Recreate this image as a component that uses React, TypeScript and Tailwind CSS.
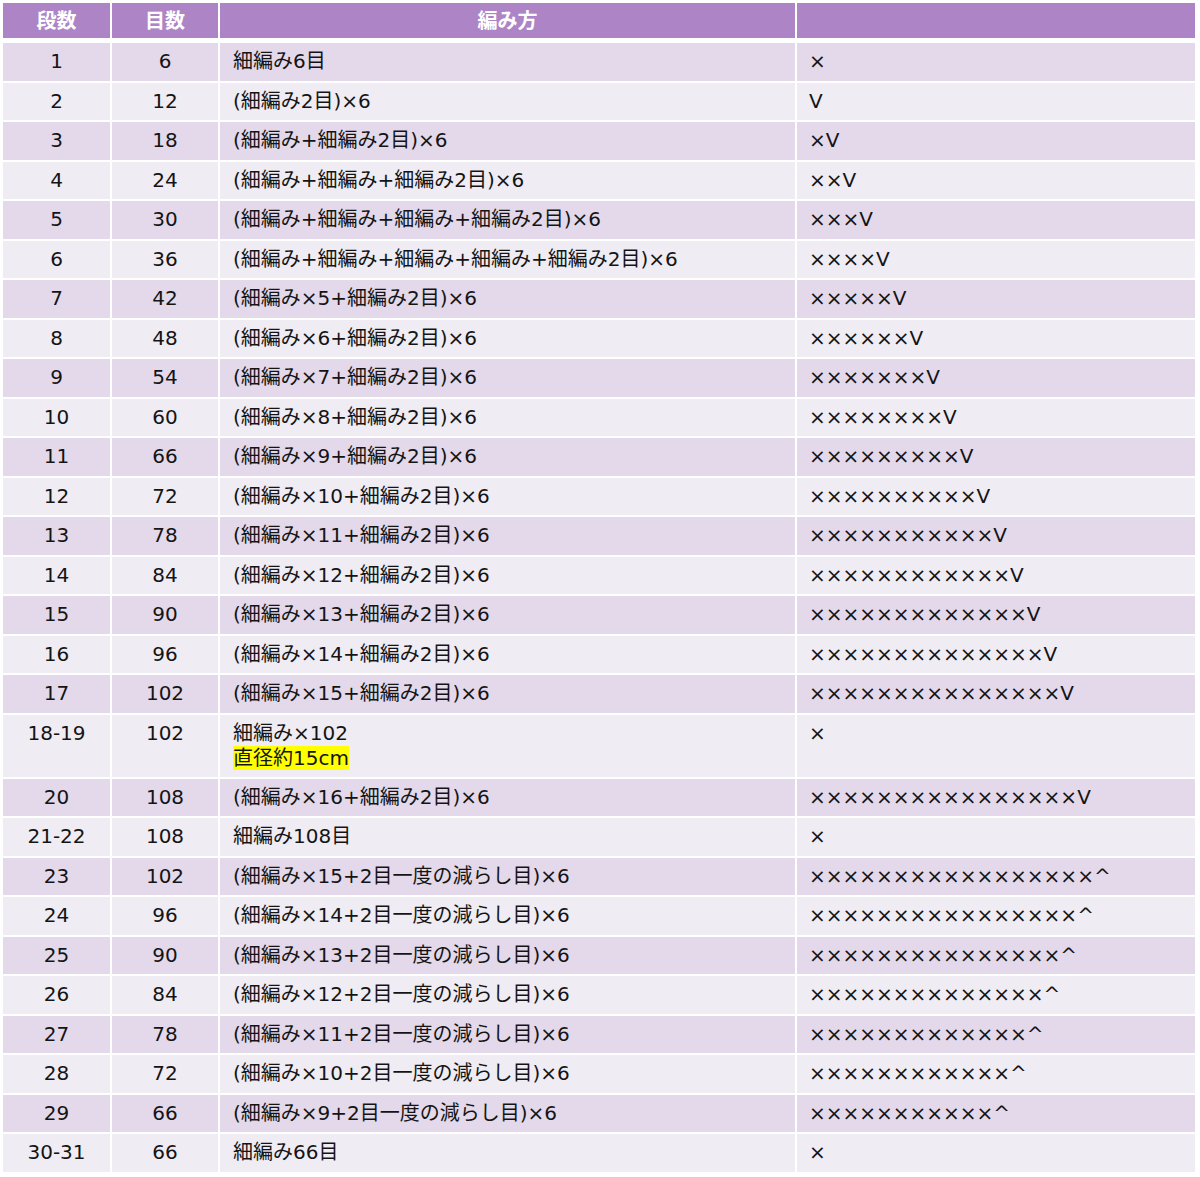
import React from "react";

type Row = { dan: string; me: string; how: React.ReactNode; sym: string; tall?: boolean };

const X = (n: number) => "×".repeat(n);

const rows: Row[] = [
  { dan: "1", me: "6", how: "細編み6目", sym: "×" },
  { dan: "2", me: "12", how: "(細編み2目)×6", sym: "V" },
  { dan: "3", me: "18", how: "(細編み+細編み2目)×6", sym: "×V" },
  { dan: "4", me: "24", how: "(細編み+細編み+細編み2目)×6", sym: "××V" },
  { dan: "5", me: "30", how: "(細編み+細編み+細編み+細編み2目)×6", sym: "×××V" },
  { dan: "6", me: "36", how: "(細編み+細編み+細編み+細編み+細編み2目)×6", sym: "××××V" },
  { dan: "7", me: "42", how: "(細編み×5+細編み2目)×6", sym: X(5) + "V" },
  { dan: "8", me: "48", how: "(細編み×6+細編み2目)×6", sym: X(6) + "V" },
  { dan: "9", me: "54", how: "(細編み×7+細編み2目)×6", sym: X(7) + "V" },
  { dan: "10", me: "60", how: "(細編み×8+細編み2目)×6", sym: X(8) + "V" },
  { dan: "11", me: "66", how: "(細編み×9+細編み2目)×6", sym: X(9) + "V" },
  { dan: "12", me: "72", how: "(細編み×10+細編み2目)×6", sym: X(10) + "V" },
  { dan: "13", me: "78", how: "(細編み×11+細編み2目)×6", sym: X(11) + "V" },
  { dan: "14", me: "84", how: "(細編み×12+細編み2目)×6", sym: X(12) + "V" },
  { dan: "15", me: "90", how: "(細編み×13+細編み2目)×6", sym: X(13) + "V" },
  { dan: "16", me: "96", how: "(細編み×14+細編み2目)×6", sym: X(14) + "V" },
  { dan: "17", me: "102", how: "(細編み×15+細編み2目)×6", sym: X(15) + "V" },
  {
    dan: "18-19",
    me: "102",
    how: (
      <>
        <div>細編み×102</div>
        <div>
          <span className="bg-[#ffff00]">直径約15cm</span>
        </div>
      </>
    ),
    sym: "×",
    tall: true,
  },
  { dan: "20", me: "108", how: "(細編み×16+細編み2目)×6", sym: X(16) + "V" },
  { dan: "21-22", me: "108", how: "細編み108目", sym: "×" },
  { dan: "23", me: "102", how: "(細編み×15+2目一度の減らし目)×6", sym: X(17) + "^" },
  { dan: "24", me: "96", how: "(細編み×14+2目一度の減らし目)×6", sym: X(16) + "^" },
  { dan: "25", me: "90", how: "(細編み×13+2目一度の減らし目)×6", sym: X(15) + "^" },
  { dan: "26", me: "84", how: "(細編み×12+2目一度の減らし目)×6", sym: X(14) + "^" },
  { dan: "27", me: "78", how: "(細編み×11+2目一度の減らし目)×6", sym: X(13) + "^" },
  { dan: "28", me: "72", how: "(細編み×10+2目一度の減らし目)×6", sym: X(12) + "^" },
  { dan: "29", me: "66", how: "(細編み×9+2目一度の減らし目)×6", sym: X(11) + "^" },
  { dan: "30-31", me: "66", how: "細編み66目", sym: "×" },
];

export default function App() {
  return (
    <div
      className="w-[1200px] h-[1177px] bg-white pt-[3px] pl-[3px] text-[#141414] text-[20px] leading-[25px]"
      style={{ fontFamily: '"DejaVu Sans", "Noto Sans CJK JP", sans-serif' }}
    >
      <div className="flex flex-col gap-[2px] w-[1192px]">
        <div className="grid grid-cols-[107px_106px_575px_398px] gap-x-[2px] h-[35px] mb-[3px] text-white font-bold">
          <div className="bg-[#ad85c6] flex items-center justify-center pt-[1px]">段数</div>
          <div className="bg-[#ad85c6] flex items-center justify-center pt-[1px]">目数</div>
          <div className="bg-[#ad85c6] flex items-center justify-center pt-[1px]">編み方</div>
          <div className="bg-[#ad85c6]"></div>
        </div>
        {rows.map((r, i) => {
          const bg = i % 2 === 0 ? "bg-[#e3d9eb]" : "bg-[#efecf4]";
          const h = r.tall ? "h-[62px]" : "h-[37.5px]";
          return (
            <div key={i} className={`grid grid-cols-[107px_106px_575px_398px] gap-x-[2px] ${h}`}>
              <div className={`${bg} text-center pt-[6px]`}>{r.dan}</div>
              <div className={`${bg} text-center pt-[6px]`}>{r.me}</div>
              <div className={`${bg} pl-[13px] pt-[6px] whitespace-nowrap`}>{r.how}</div>
              <div className={`${bg} pl-[12px] pt-[6px] whitespace-nowrap`}>{r.sym}</div>
            </div>
          );
        })}
      </div>
    </div>
  );
}
